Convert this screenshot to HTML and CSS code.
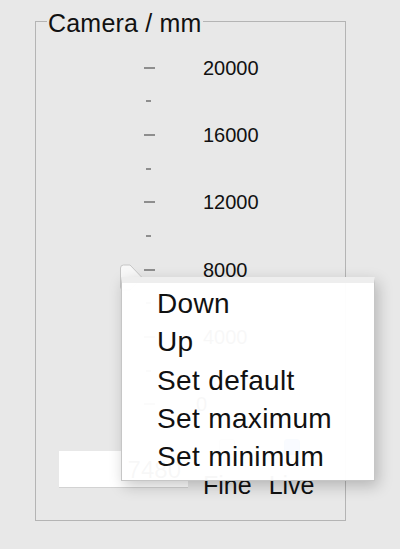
FILE: index.html
```html
<!DOCTYPE html>
<html lang="en">
<head>
  <meta charset="UTF-8" />
  <title>Camera / mm</title>
  <link rel="stylesheet" href="styles.css">
</head>
<body>
  <fieldset class="panel">
    <legend>Camera / mm</legend>

    <div class="scale">
      <div class="tick"><span class="mark"></span><span class="num">20000</span></div>
      <div class="tick minor"><span class="mark"></span></div>
      <div class="tick"><span class="mark"></span><span class="num">16000</span></div>
      <div class="tick minor"><span class="mark"></span></div>
      <div class="tick"><span class="mark"></span><span class="num">12000</span></div>
      <div class="tick minor"><span class="mark"></span></div>
      <div class="tick"><span class="mark"></span><span class="num">8000</span></div>
      <div class="tick minor"><span class="mark"></span></div>
      <div class="tick"><span class="mark"></span><span class="num">4000</span></div>
      <div class="tick minor"><span class="mark"></span></div>
      <div class="tick"><span class="mark"></span><span class="num zero">0</span></div>

      <svg class="thumb" width="25" height="28" viewBox="0 0 25 28">
        <path d="M1.5 4 Q1.5 1 4.5 1 H11 L23 13.5 L11 26 H4.5 Q1.5 26 1.5 23 Z" fill="#f8f8f8" stroke="#c6c6c6" stroke-width="1"/>
      </svg>
    </div>

    <div class="controls">
      <div class="field">7480</div>
      <label class="check"><span class="box"></span>Fine</label>
      <label class="check live"><span class="box on"></span>Live</label>
    </div>
  </fieldset>

  <div class="menu">
    <div class="item">Down</div>
    <div class="item">Up</div>
    <div class="item">Set default</div>
    <div class="item">Set maximum</div>
    <div class="item">Set minimum</div>
  </div>
</body>
</html>
```

FILE: styles.css
```css
* { box-sizing: border-box; }

body {
  margin: 0;
  height: 549px;
  overflow: hidden;
  position: relative;
  background: #e8e8e8;
  color: #111;
  font-family: "Liberation Sans", Arial, sans-serif;
}

.panel {
  margin: 9px 0 0 35px;
  padding: 0;
  width: 311px;
  height: 512px;
  min-width: 0;
  border: 1px solid #b4b4b4;
}

.panel legend {
  margin-left: 11px;
  padding: 0 1px;
  font-size: 25px;
  line-height: 25px;
  letter-spacing: 0.2px;
  position: relative;
  top: 2px;
}

/* slider ticks and labels */
.scale {
  position: relative;
  margin: 17px 0 0 108px;
}

.tick {
  height: 33.65px;
  display: flex;
  align-items: center;
}

.mark {
  width: 11px;
  height: 2px;
  background: #8e8e8e;
}

.minor .mark {
  width: 5px;
  margin-left: 2px;
}

.num {
  margin-left: 48px;
  font-size: 20px;
  line-height: 1;
}

.num.zero { margin-left: 41px; }

.thumb {
  position: absolute;
  left: -25px;
  top: 213px;
}

/* bottom row */
.controls {
  display: flex;
  align-items: flex-start;
  margin: 16px 0 0 23px;
}

.field {
  width: 129px;
  height: 37px;
  margin-top: 14px;
  padding-right: 7px;
  background: #fff;
  border-bottom: 1px solid #d2d2d2;
  font-size: 24px;
  line-height: 37px;
  text-align: right;
}

.check {
  display: flex;
  flex-direction: column;
  align-items: center;
  margin-left: 15px;
  font-size: 25px;
  line-height: 25px;
}

.check.live { margin-left: 17px; }

.box {
  width: 16px;
  height: 16px;
  margin: 2px 0 18px;
  background: #fff;
  border: 1px solid #b5b5b5;
  border-radius: 3px;
}

.box.on {
  background: #3d8ef7;
  border-color: #3478d8;
}

/* popup menu */
.menu {
  position: absolute;
  left: 121px;
  top: 277px;
  width: 254px;
  padding: 2px 0 4px;
  background: rgba(255, 255, 255, 0.97);
  border: 1px solid #c6c6c6;
  border-top: 6px solid #eeeeee;
  box-shadow: 3px 5px 14px rgba(0, 0, 0, 0.22);
}

.item {
  padding-left: 35px;
  font-size: 28px;
  line-height: 38.3px;
  letter-spacing: 0.35px;
  color: #111;
}
```
